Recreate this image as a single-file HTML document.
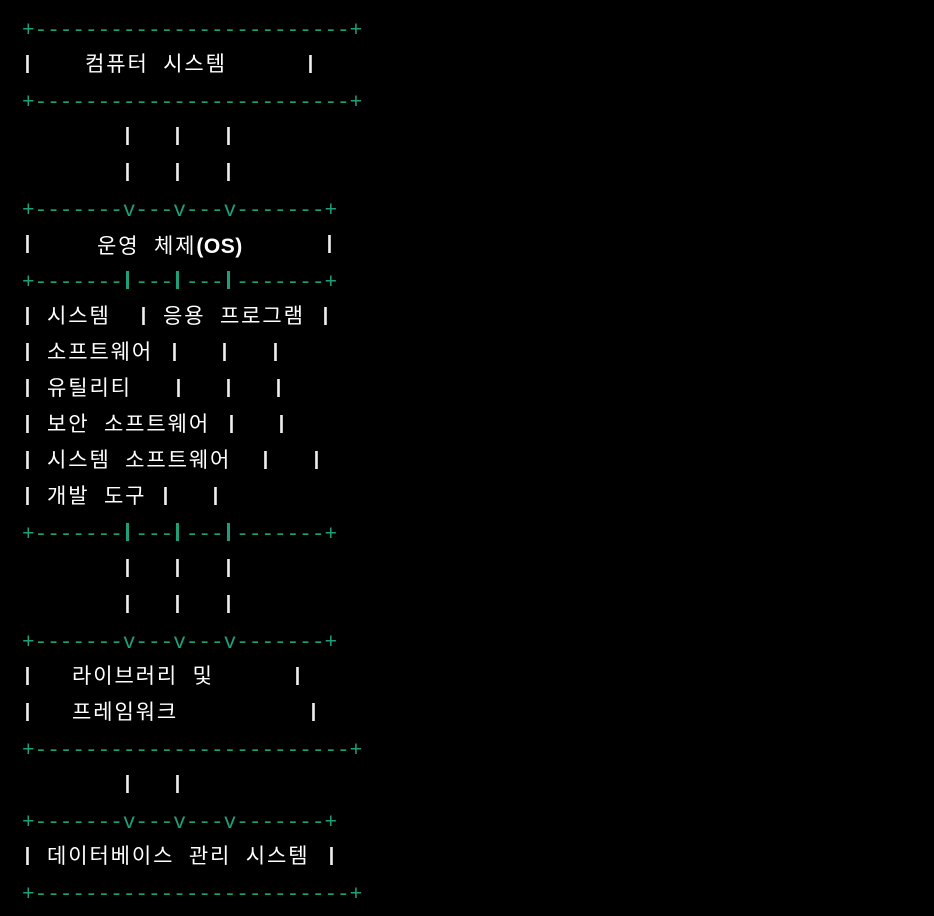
<!DOCTYPE html>
<html><head><meta charset="utf-8"><style>
html,body{margin:0;padding:0;background:#000;width:934px;height:916px;overflow:hidden}
.r{position:absolute;left:0;height:36px;width:934px}
.g{position:absolute;top:4px;left:22px;color:#1f9e7a;font:21px/36px "Liberation Mono",monospace;white-space:pre}
.k{position:absolute;top:3px;color:#fff;font:21px/36px "Liberation Mono","Noto Sans CJK KR",monospace;letter-spacing:1.9px;white-space:pre}
.p{position:absolute;top:9px;width:3px;height:18px;background:linear-gradient(90deg,#aaa,#fff,#999)}
.q{position:absolute;top:9px;width:3px;height:18px;background:#1f9e7a}
b{font-family:"Liberation Sans",sans-serif;font-weight:bold;letter-spacing:0.5px}
</style></head><body>
<div class="r" style="top:10px"><span class="g">+-------------------------+</span></div>
<div class="r" style="top:46px"><i class="p" style="left:26px"></i><span class="k" style="left:85px">컴퓨터 시스템</span><i class="p" style="left:309px"></i></div>
<div class="r" style="top:82px"><span class="g">+-------------------------+</span></div>
<div class="r" style="top:118px"><i class="p" style="left:126px"></i><i class="p" style="left:176px"></i><i class="p" style="left:227px"></i></div>
<div class="r" style="top:154px"><i class="p" style="left:126px"></i><i class="p" style="left:176px"></i><i class="p" style="left:227px"></i></div>
<div class="r" style="top:190px"><span class="g">+-------v---v---v-------+</span></div>
<div class="r" style="top:226px"><i class="p" style="left:26px"></i><span class="k" style="left:97px">운영 체제<b>(OS)</b></span><i class="p" style="left:328px"></i></div>
<div class="r" style="top:262px"><span class="g">+-------&nbsp;---&nbsp;---&nbsp;-------+</span><i class="q" style="left:126px"></i><i class="q" style="left:176px"></i><i class="q" style="left:227px"></i></div>
<div class="r" style="top:298px"><i class="p" style="left:26px"></i><span class="k" style="left:47px">시스템</span><i class="p" style="left:142px"></i><span class="k" style="left:163px">응용 프로그램</span><i class="p" style="left:324px"></i></div>
<div class="r" style="top:334px"><i class="p" style="left:26px"></i><span class="k" style="left:47px">소프트웨어</span><i class="p" style="left:173px"></i><i class="p" style="left:223px"></i><i class="p" style="left:274px"></i></div>
<div class="r" style="top:370px"><i class="p" style="left:26px"></i><span class="k" style="left:47px">유틸리티</span><i class="p" style="left:177px"></i><i class="p" style="left:227px"></i><i class="p" style="left:277px"></i></div>
<div class="r" style="top:406px"><i class="p" style="left:26px"></i><span class="k" style="left:47px">보안 소프트웨어</span><i class="p" style="left:230px"></i><i class="p" style="left:280px"></i></div>
<div class="r" style="top:442px"><i class="p" style="left:26px"></i><span class="k" style="left:47px">시스템 소프트웨어</span><i class="p" style="left:264px"></i><i class="p" style="left:315px"></i></div>
<div class="r" style="top:478px"><i class="p" style="left:26px"></i><span class="k" style="left:47px">개발 도구</span><i class="p" style="left:164px"></i><i class="p" style="left:214px"></i></div>
<div class="r" style="top:514px"><span class="g">+-------&nbsp;---&nbsp;---&nbsp;-------+</span><i class="q" style="left:126px"></i><i class="q" style="left:176px"></i><i class="q" style="left:227px"></i></div>
<div class="r" style="top:550px"><i class="p" style="left:126px"></i><i class="p" style="left:176px"></i><i class="p" style="left:227px"></i></div>
<div class="r" style="top:586px"><i class="p" style="left:126px"></i><i class="p" style="left:176px"></i><i class="p" style="left:227px"></i></div>
<div class="r" style="top:622px"><span class="g">+-------v---v---v-------+</span></div>
<div class="r" style="top:658px"><i class="p" style="left:26px"></i><span class="k" style="left:72px">라이브러리 및</span><i class="p" style="left:296px"></i></div>
<div class="r" style="top:694px"><i class="p" style="left:26px"></i><span class="k" style="left:72px">프레임워크</span><i class="p" style="left:312px"></i></div>
<div class="r" style="top:730px"><span class="g">+-------------------------+</span></div>
<div class="r" style="top:766px"><i class="p" style="left:126px"></i><i class="p" style="left:176px"></i></div>
<div class="r" style="top:802px"><span class="g">+-------v---v---v-------+</span></div>
<div class="r" style="top:838px"><i class="p" style="left:26px"></i><span class="k" style="left:47px">데이터베이스 관리 시스템</span><i class="p" style="left:330px"></i></div>
<div class="r" style="top:874px"><span class="g">+-------------------------+</span></div>
</body></html>
